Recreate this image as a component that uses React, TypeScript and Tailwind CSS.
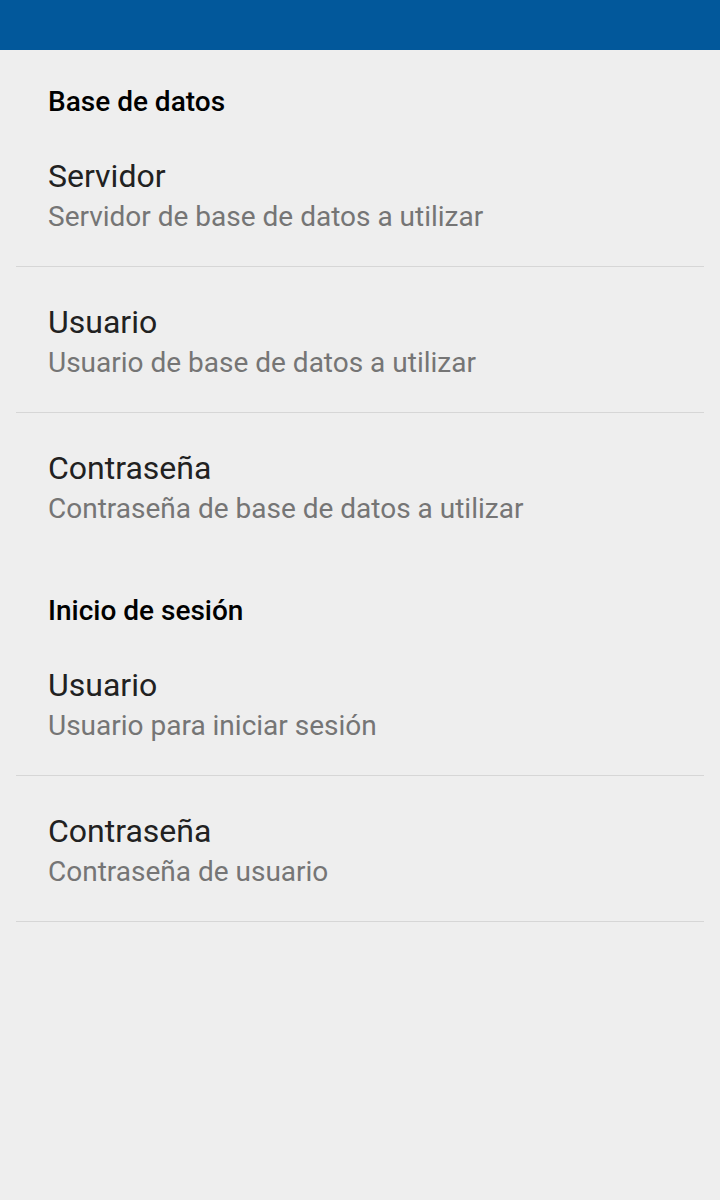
const groups = [
  {
    title: "Base de datos",
    items: [
      { title: "Servidor", summary: "Servidor de base de datos a utilizar" },
      { title: "Usuario", summary: "Usuario de base de datos a utilizar" },
      { title: "Contraseña", summary: "Contraseña de base de datos a utilizar" },
    ],
  },
  {
    title: "Inicio de sesión",
    items: [
      { title: "Usuario", summary: "Usuario para iniciar sesión" },
      { title: "Contraseña", summary: "Contraseña de usuario" },
    ],
  },
];

export default function App() {
  return (
    <div className="min-h-[1200px] bg-[#eeeeee] font-['Roboto',sans-serif]">
      <div className="h-[50px] bg-[#02589b]" />
      {groups.map((group, gi) => (
        <div key={gi}>
          <div className="pt-[36px] pb-[3px] pl-[48px] text-[28px] leading-[32px] font-medium text-black">
            {group.title}
          </div>
          <div className="px-4">
            {group.items.map((item, i) => {
              const last = gi === 0 && i === group.items.length - 1;
              return (
                <div
                  key={i}
                  className={
                    last
                      ? "border-b border-transparent px-8 pt-[37px] pb-[32px]"
                      : "border-b border-[#d6d6d6] px-8 pt-[37px] pb-[32px]"
                  }
                >
                  <div className="text-[32px] leading-[36px] text-[#212121]">{item.title}</div>
                  <div className="mt-[5px] mb-[-1px] text-[28px] leading-[36px] text-[#757575]">{item.summary}</div>
                </div>
              );
            })}
          </div>
        </div>
      ))}
    </div>
  );
}
